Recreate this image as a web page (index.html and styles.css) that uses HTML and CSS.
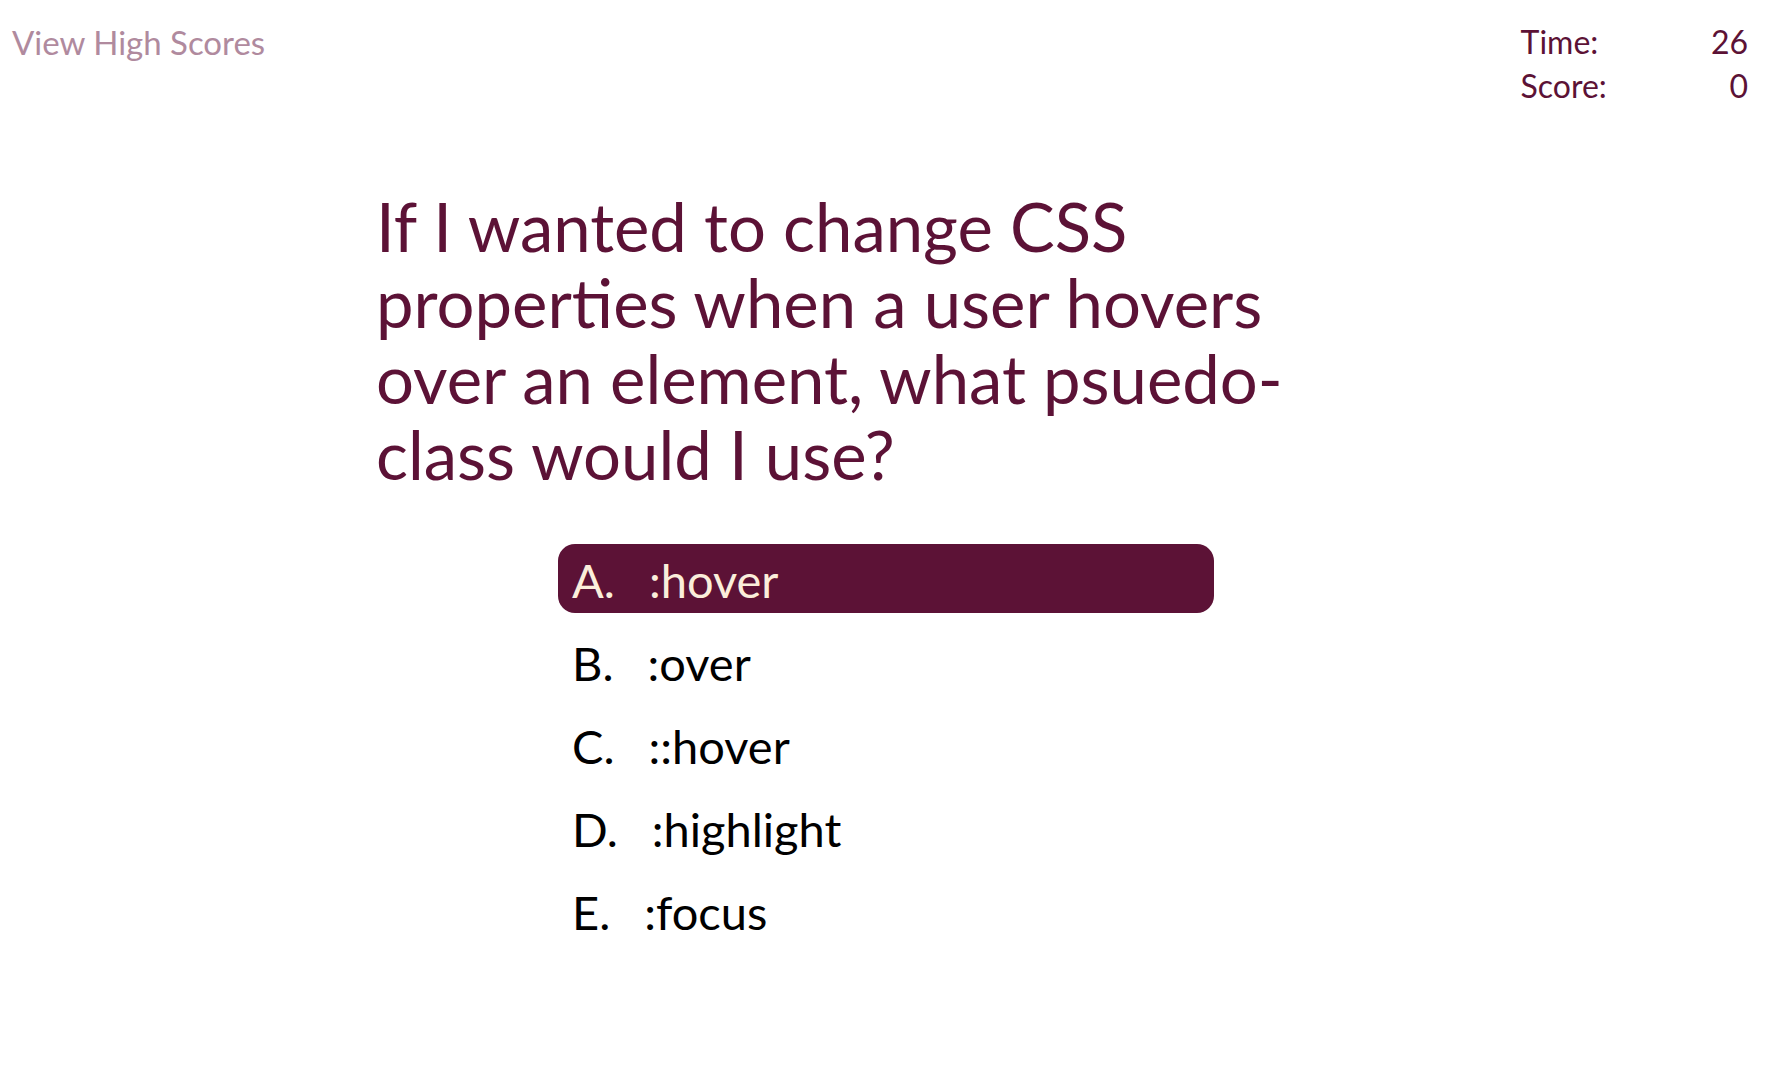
FILE: index.html
```html
<!DOCTYPE html>
<html lang="en">
<head>
<meta charset="utf-8">
<title>Code Quiz</title>
<link rel="stylesheet" href="styles.css">
</head>
<body>
<header class="topbar">
  <a class="highscores-link" href="#">View High Scores</a>
  <div class="stats">
    <span class="stat-label">Time:</span><span class="stat-value">26</span>
    <span class="stat-label">Score:</span><span class="stat-value">0</span>
  </div>
</header>
<main class="quiz">
  <h1 class="question">If I wanted to change CSS properties when a user hovers over an element, what psuedo-class would I use?</h1>
  <ul class="answers">
    <li class="answer answer-active"><span class="answer-key">A.</span>:hover</li>
    <li class="answer"><span class="answer-key">B.</span>:over</li>
    <li class="answer"><span class="answer-key">C.</span>::hover</li>
    <li class="answer"><span class="answer-key">D.</span>:highlight</li>
    <li class="answer"><span class="answer-key">E.</span>:focus</li>
  </ul>
</main>
</body>
</html>
```
FILE: styles.css
```css
* { box-sizing: border-box; }
html, body { margin: 0; padding: 0; background: #ffffff; }
body {
  font-family: Lato, "Open Sans", sans-serif;
  color: #5c1236;
}
.topbar {
  display: flex;
  justify-content: space-between;
  align-items: flex-start;
  padding: 20px 24px 0 12px;
}
.highscores-link {
  font-size: 33px;
  line-height: 44px;
  color: #b08a9e;
  text-decoration: none;
}
.stats {
  display: grid;
  grid-template-columns: auto auto;
  column-gap: 104px;
  font-size: 32px;
  line-height: 44px;
  color: #5c1236;
}
.stat-value { text-align: right; }
.quiz {
  width: 1020px;
  margin: 80px auto 0;
}
.question {
  margin: 0;
  padding-right: 60px;
  font-weight: 400;
  font-size: 67px;
  line-height: 76px;
  color: #5c1236;
}
.answers {
  list-style: none;
  margin: 52px auto 0;
  padding: 0;
  width: 656px;
  display: flex;
  flex-direction: column;
  gap: 14px;
}
.answer {
  height: 69px;
  padding: 6px 14px 0;
  font-size: 47px;
  line-height: 60px;
  color: #000000;
  border-radius: 17px;
}
.answer-active {
  background: #5c1236;
  color: #fbeedb;
}
.answer-key {
  display: inline-block;
  margin-right: 34px;
}
```
